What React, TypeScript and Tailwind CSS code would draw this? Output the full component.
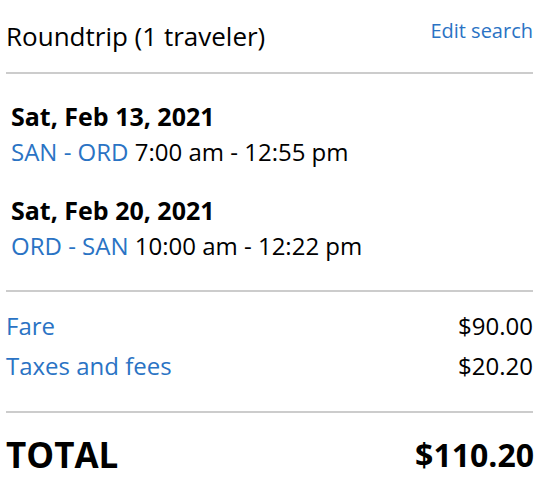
export default function App() {
  const font = { fontFamily: '"Open Sans", "Noto Sans", sans-serif' };
  return (
    <div className="w-[552px] h-[498px] bg-white text-black overflow-hidden" style={font}>
      <div className="pl-[6px] pr-[19px]">
        {/* Header */}
        <div className="flex justify-between items-start h-[72px]">
          <div className="mt-[18px] text-[26px] leading-[36px]">Roundtrip (1 traveler)</div>
          <a className="mt-[16px] text-[20px] leading-[30px] text-[#2a73c4]">Edit search</a>
        </div>
        <div className="h-[2px] bg-[#cccccc]" />

        {/* Flights */}
        <div className="pl-[5px] pt-[24px] leading-[36px]">
          <div className="font-bold text-[25px]">Sat, Feb 13, 2021</div>
          <div className="text-[24px]">
            <span className="text-[#2a73c4]">SAN - ORD</span> 7:00 am - 12:55 pm
          </div>
          <div className="font-bold text-[25px] mt-[22px]">Sat, Feb 20, 2021</div>
          <div className="text-[24px]">
            <span className="text-[#2a73c4]">ORD - SAN</span> 10:00 am - 12:22 pm
          </div>
        </div>
        <div className="h-[2px] bg-[#cccccc] mt-[26px]" />

        {/* Price breakdown */}
        <div className="pt-[14px] pb-[25px] text-[24px] leading-[40px]">
          <div className="flex justify-between">
            <span className="text-[#2a73c4]">Fare</span>
            <span>$90.00</span>
          </div>
          <div className="flex justify-between">
            <span className="text-[#2a73c4]">Taxes and fees</span>
            <span>$20.20</span>
          </div>
        </div>
        <div className="h-[2px] bg-[#cccccc]" />

        {/* Total */}
        <div className="flex justify-between items-center pt-[19px] h-[64px] font-bold">
          <span className="text-[35px] leading-[44px]">TOTAL</span>
          <span className="text-[32px] leading-[44px] mr-[-1px]">$110.20</span>
        </div>
      </div>
    </div>
  );
}
